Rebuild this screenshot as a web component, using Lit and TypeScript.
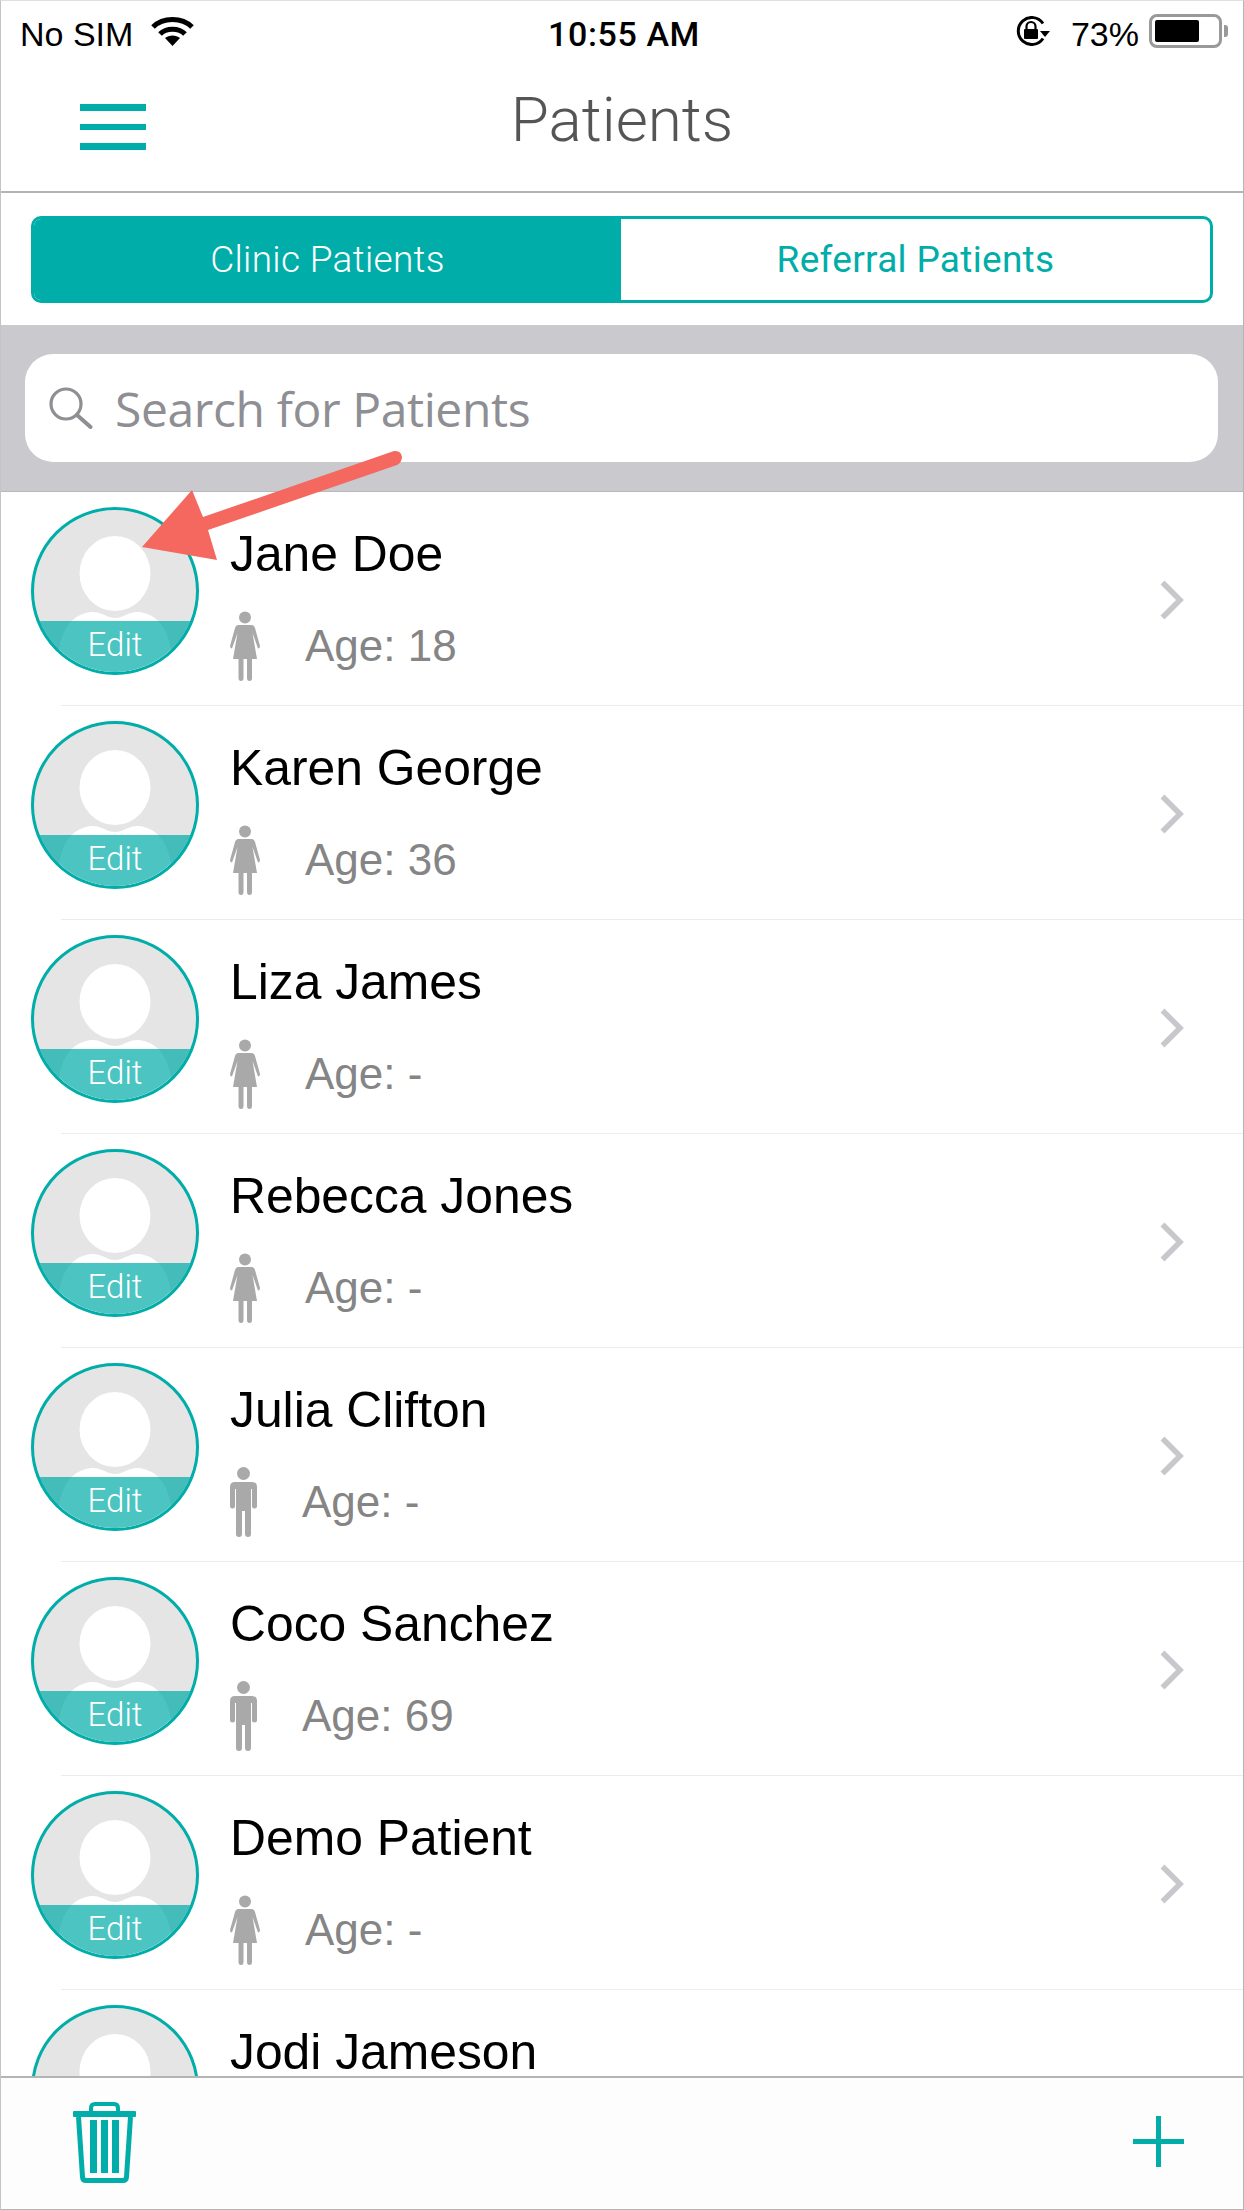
import { LitElement, html, css, svg } from "lit";
import { customElement } from "lit/decorators.js";

type Patient = { name: string; age: string; sex: "f" | "m" };

const PATIENTS: Patient[] = [
  { name: "Jane Doe", age: "18", sex: "f" },
  { name: "Karen George", age: "36", sex: "f" },
  { name: "Liza James", age: "-", sex: "f" },
  { name: "Rebecca Jones", age: "-", sex: "f" },
  { name: "Julia Clifton", age: "-", sex: "m" },
  { name: "Coco Sanchez", age: "69", sex: "m" },
  { name: "Demo Patient", age: "-", sex: "f" },
  { name: "Jodi Jameson", age: "", sex: "f" },
];

const female = html`<svg class="sex" width="30" height="70" viewBox="0 0 30 70">
  <circle cx="15" cy="6.5" r="6" fill="#a9a9a9" />
  <path fill="#a9a9a9" d="M8.5 14 H21.5 Q24 14 25 17 L30 35 Q30 37.5 28 37.5 L22.5 22 L27 48 H22 V67 Q22 70 19.5 70 Q17 70 17 67 V48 H13.5 V67 Q13.5 70 11 70 Q8.5 70 8.5 67 V48 H3 L7.5 22 L2 37.5 Q0 37.5 0 35 L5 17 Q6 14 8.5 14 Z" />
</svg>`;

const male = html`<svg class="sex" width="27" height="70" viewBox="0 0 27 70">
  <circle cx="13.5" cy="6.5" r="6.5" fill="#a9a9a9" />
  <path fill="#a9a9a9" d="M5 15 H22 Q27 15 27 20 V39 Q27 41.5 24.5 41.5 Q22 41.5 22 39 V22 H21 V67 Q21 70 18 70 Q15 70 15 67 V44 H12 V67 Q12 70 9 70 Q6 70 6 67 V22 H5 V39 Q5 41.5 2.5 41.5 Q0 41.5 0 39 V20 Q0 15 5 15 Z" />
</svg>`;

const avatarArt = svg`
  <ellipse cx="84" cy="66.5" rx="35.5" ry="37.5" fill="#fff" />
  <path fill="#fff" d="M26 168 C26 130 36 108 60 105 C70 104 76 111 84 111 C92 111 98 104 108 105 C132 108 142 130 142 168 Z" />
`;

@customElement("app-root")
export class AppRoot extends LitElement {
  static styles = css`
    :host {
      display: block;
      width: 1244px;
      height: 2210px;
      font-family: "Liberation Sans", Arial, sans-serif;
      color: #000;
    }
    .frame {
      position: relative;
      box-sizing: border-box;
      width: 1244px;
      height: 2210px;
      display: flex;
      flex-direction: column;
      overflow: hidden;
      background: #fff;
      border-top: 1px solid #e0e0e0;
      border-left: 1px solid #c4c4c4;
      border-right: 1px solid #b4b4b4;
      border-bottom: 1px solid #b4b4b4;
    }
    .status {
      height: 64px;
      flex: none;
      display: grid;
      grid-template-columns: 1fr auto 1fr;
      align-items: flex-start;
      padding: 13px 15px 0 19px;
      box-sizing: border-box;
      font-size: 34px;
      line-height: 40px;
    }
    .status-left {
      display: flex;
      gap: 18px;
      align-items: flex-start;
    }
    .status-left svg {
      margin-top: 2px;
    }
    .time {
      font-weight: 700;
      font-size: 34px;
      letter-spacing: 0.6px;
      -webkit-text-stroke: 0;
      font-family: Roboto, "Liberation Sans", sans-serif;
      font-weight: 500;
    }
    .status-right {
      display: flex;
      justify-content: flex-end;
      align-items: flex-start;
    }
    .status-right .lock {
      margin: 2px 21px 0 0;
    }
    .status-right .pct {
      margin-right: 10px;
      font-size: 34px;
    }
    .battery {
      display: flex;
      align-items: center;
      margin-top: 0;
    }
    .battery-body {
      box-sizing: border-box;
      width: 73px;
      height: 34px;
      border: 3px solid #999;
      border-radius: 8px;
      padding: 3px;
    }
    .battery-level {
      width: 44px;
      height: 22px;
      background: #000;
      border-radius: 2px;
    }
    .battery-nub {
      width: 4px;
      height: 12px;
      margin-left: 2px;
      background: #999;
      border-radius: 0 3px 3px 0;
    }

    .nav {
      height: 128px;
      flex: none;
      box-sizing: border-box;
      border-bottom: 2px solid #b4b4b4;
      display: grid;
      grid-template-columns: 1fr auto 1fr;
      align-items: flex-start;
      padding-left: 79px;
    }
    .burger {
      margin-top: 39px;
      width: 66px;
      display: flex;
      flex-direction: column;
      gap: 13px;
    }
    .burger span {
      display: block;
      height: 6.5px;
      background: #00ada8;
    }
    .title {
      font-family: Roboto, "Liberation Sans", sans-serif;
      font-weight: 300;
      font-size: 62px;
      line-height: 70px;
      margin-top: 20px;
      color: #555;
      padding-right: 79px;
    }

    .seg-wrap {
      height: 132px;
      flex: none;
      box-sizing: border-box;
      padding: 23px 30px 0;
    }
    .seg {
      display: flex;
      height: 87px;
      box-sizing: border-box;
      border: 3px solid #00ada8;
      border-radius: 10px;
      overflow: hidden;
      font-size: 37px;
      width: 1182px;
    }
    .seg div {
      display: flex;
      align-items: center;
      justify-content: center;
      font-family: Roboto, "Liberation Sans", sans-serif;
      font-weight: 300;
      letter-spacing: 0.3px;
    }
    .seg .on {
      width: 587px;
      background: #00ada8;
      color: #fff;
    }
    .seg .off {
      flex: 1;
      color: #00ada8;
      font-weight: 400;
    }

    .search-wrap {
      height: 167px;
      flex: none;
      box-sizing: border-box;
      background: #c9c9ce;
      padding: 29px 25px 0 24px;
      border-bottom: 1px solid #b8b8bc;
    }
    .search {
      height: 108px;
      background: #fff;
      border-radius: 28px;
      display: flex;
      align-items: center;
      padding-left: 24px;
      gap: 22px;
      color: #8e8e93;
      font-size: 48px;
      font-family: "Open Sans", "Liberation Sans", sans-serif;
      letter-spacing: -0.4px;
    }

    .list {
      flex: 1;
      min-height: 0;
      overflow: hidden;
    }
    .row {
      height: 213px;
      box-sizing: border-box;
      padding: 15px 0 0 30px;
      display: flex;
      align-items: flex-start;
    }
    .rule {
      height: 1px;
      margin-left: 60px;
      background: #ececec;
    }
    .avatar {
      position: relative;
      flex: none;
      width: 168px;
      height: 168px;
      box-sizing: border-box;
      border: 3px solid #00ada8;
      border-radius: 50%;
      overflow: hidden;
      background: #e5e5e5;
    }
    .avatar svg {
      position: absolute;
      left: -3px;
      top: -3px;
    }
    .edit {
      position: absolute;
      left: 0;
      right: 0;
      bottom: 0;
      height: 51px;
      background: rgba(0, 173, 168, 0.7);
      color: #fff;
      font-family: Roboto, "Liberation Sans", sans-serif;
      font-weight: 300;
      font-size: 33px;
      line-height: 40px;
      padding-top: 4px;
      box-sizing: border-box;
      text-align: center;
    }
    .info {
      margin-left: 31px;
      padding-top: 19px;
      flex: 1;
    }
    .name {
      font-size: 49.8px;
      line-height: 56px;
    }
    .meta {
      margin-top: 29px;
      display: flex;
      align-items: center;
      gap: 45px;
      font-size: 44px;
      line-height: 50px;
      color: #858585;
    }
    .chev {
      flex: none;
      margin: 73px 59px 0 0;
    }

    .foot {
      height: 133px;
      flex: none;
      box-sizing: border-box;
      border-top: 2px solid #b4b4b4;
      background: #fdfdfd;
      display: flex;
      justify-content: space-between;
      align-items: flex-start;
      padding: 24px 59px 0 72px;
    }
    .plus {
      margin-top: 14px;
    }
    .arrow {
      position: absolute;
      left: -1px;
      top: -1px;
      pointer-events: none;
    }
  `;

  private renderRow(p: Patient) {
    return html`
      <div class="row">
        <div class="avatar">
          <svg width="168" height="168" viewBox="0 0 168 168">${avatarArt}</svg>
          <div class="edit">Edit</div>
        </div>
        <div class="info">
          <div class="name">${p.name}</div>
          <div class="meta">
            ${p.sex === "f" ? female : male}
            <span>Age: ${p.age}</span>
          </div>
        </div>
        <svg class="chev" width="24" height="40" viewBox="0 0 24 40">
          <path d="M2.5 2.5 L20 20 L2.5 37.5" fill="none" stroke="#c7c7cc" stroke-width="5.5" />
        </svg>
      </div>
      <div class="rule"></div>
    `;
  }

  render() {
    return html`
      <div class="frame">
        <div class="status">
          <div class="status-left">
            <span>No SIM</span>
            <svg width="43" height="30" viewBox="0 0 43 30">
              <path d="M2 11 C12 1 31 1 41 11" fill="none" stroke="#000" stroke-width="5" />
              <path d="M9 18 C15 11.5 28 11.5 34 18" fill="none" stroke="#000" stroke-width="5" />
              <path d="M21.5 30 L14 22 C18 18.5 25 18.5 29 22 Z" fill="#000" />
            </svg>
          </div>
          <div class="time">10:55 AM</div>
          <div class="status-right">
            <svg class="lock" width="34" height="30" viewBox="0 0 34 30">
              <path d="M27 7.5 A13.5 13.5 0 1 0 27 22.5" fill="none" stroke="#000" stroke-width="3" />
              <path d="M24 15 H34 L29 21 Z" fill="#000" />
              <rect x="8" y="13" width="14" height="10" rx="1" fill="#000" />
              <path d="M10.5 13.5 V10.5 A4.5 4.5 0 0 1 19.5 10.5 V13.5" fill="none" stroke="#000" stroke-width="2.2" />
            </svg>
            <span class="pct">73%</span>
            <div class="battery">
              <div class="battery-body"><div class="battery-level"></div></div>
              <div class="battery-nub"></div>
            </div>
          </div>
        </div>

        <div class="nav">
          <div class="burger"><span></span><span></span><span></span></div>
          <div class="title">Patients</div>
          <div></div>
        </div>

        <div class="seg-wrap">
          <div class="seg">
            <div class="on">Clinic Patients</div>
            <div class="off">Referral Patients</div>
          </div>
        </div>

        <div class="search-wrap">
          <div class="search">
            <svg width="44" height="42" viewBox="0 0 44 42">
              <circle cx="17" cy="17" r="15" fill="none" stroke="#8e8e93" stroke-width="3.2" />
              <path d="M28 28 L41.5 40" fill="none" stroke="#8e8e93" stroke-width="4" stroke-linecap="round" />
            </svg>
            <span>Search for Patients</span>
          </div>
        </div>

        <div class="list">${PATIENTS.map((p) => this.renderRow(p))}</div>

        <div class="foot">
          <svg width="63" height="81" viewBox="0 0 63 81">
            <path d="M18 10 V6 Q18 2 22 2 H41 Q45 2 45 6 V10" fill="none" stroke="#00ada8" stroke-width="4" />
            <rect x="0" y="9" width="63" height="6" rx="1" fill="#00ada8" />
            <path d="M5.5 15 L9.5 75 Q9.8 78.5 13 78.5 H50 Q53.2 78.5 53.5 75 L57.5 15" fill="none" stroke="#00ada8" stroke-width="5" />
            <rect x="17" y="18" width="7" height="53" fill="#00ada8" />
            <rect x="28" y="18" width="7" height="53" fill="#00ada8" />
            <rect x="39" y="18" width="7" height="53" fill="#00ada8" />
          </svg>
          <svg class="plus" width="51" height="51" viewBox="0 0 51 51">
            <path d="M23 0 H28 V23 H51 V28 H28 V51 H23 V28 H0 V23 H23 Z" fill="#00ada8" />
          </svg>
        </div>

        <svg class="arrow" width="420" height="580" viewBox="0 0 420 580">
          <path fill="#f4685f" d="M142 547 L192 490 L203 517 L394 451 Q401 450 402 457 Q402 462 397 465 L208 530 L217 560 Z" />
        </svg>
      </div>
    `;
  }
}
